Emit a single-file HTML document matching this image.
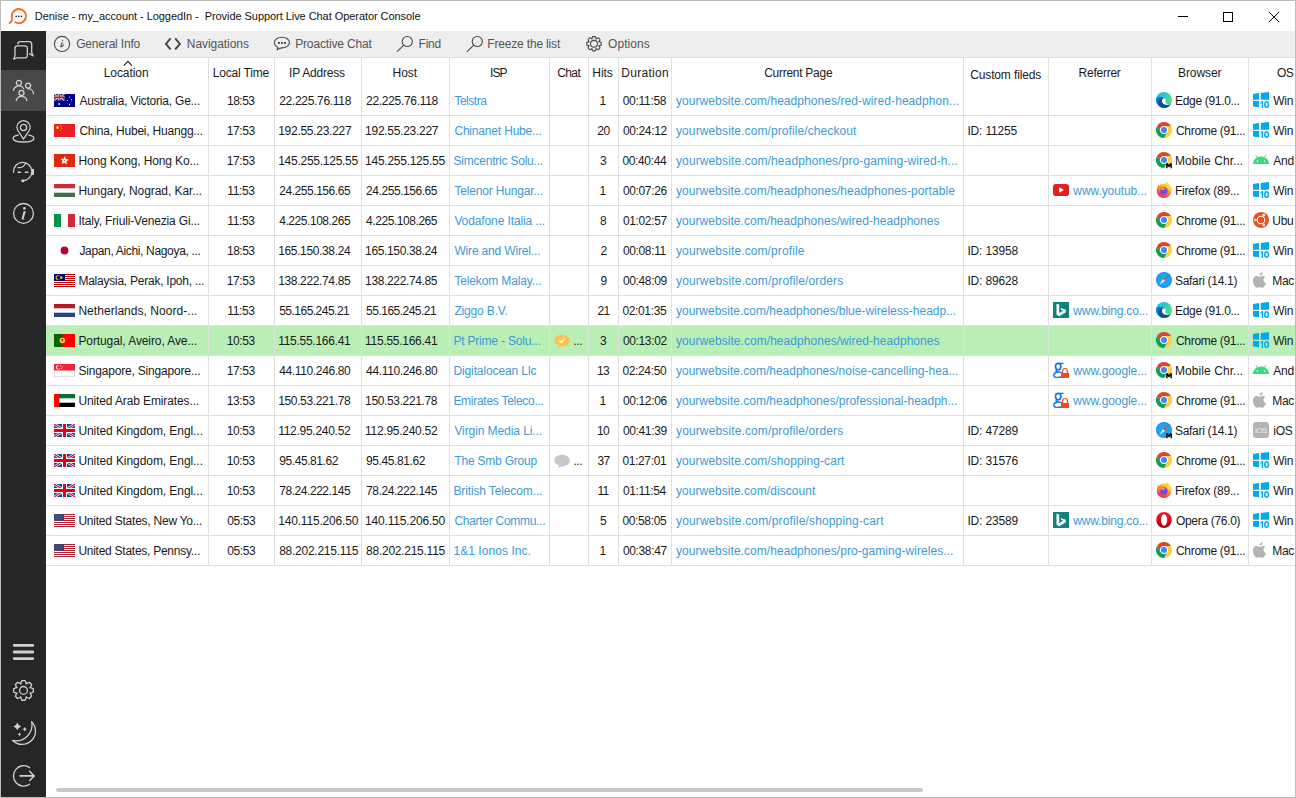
<!DOCTYPE html>
<html><head><meta charset="utf-8"><style>
*{box-sizing:border-box;margin:0;padding:0}
html,body{width:1296px;height:798px;overflow:hidden;background:#fff}
body{position:relative;font-family:"Liberation Sans",sans-serif;font-size:12px;color:#1A1A1A}
.a{position:absolute}
.t{position:absolute;white-space:pre;line-height:14px}
.lk{color:#3C9AD6}
svg{position:absolute;display:block}
</style></head><body>
<div class="a" style="left:0;top:0;width:1296px;height:798px;border:1px solid #BDBDBD"></div>
<svg style="left:8px;top:7px" width="20" height="18" viewBox="0 0 20 18"><path d="M1.6,16.1 C3.6,14.6 4.4,12.9 4.1,11.2 A7.1,7.1 0 1 1 7.4,15.3" fill="none" stroke="#F26A1B" stroke-width="1.8" stroke-linecap="round"/><circle cx="8.2" cy="9.4" r="0.8" fill="#222"/><circle cx="10.8" cy="9.4" r="0.8" fill="#222"/><circle cx="13.5" cy="9.4" r="0.8" fill="#222"/></svg>
<div class="a" style="left:1178px;top:16px;width:10px;height:1px;background:#000"></div>
<div class="a" style="left:1223px;top:12px;width:10px;height:10px;border:1px solid #000"></div>
<svg style="left:1268px;top:11px" width="12" height="12" viewBox="0 0 12 12"><path d="M0.8,0.8 L11.2,11.2 M11.2,0.8 L0.8,11.2" stroke="#000" stroke-width="1"/></svg>
<div class="a" style="left:1px;top:31px;width:45px;height:766px;background:#252628"></div>
<div class="a" style="left:1px;top:70px;width:45px;height:41px;background:#484848"></div>
<svg style="left:12px;top:40px" width="24" height="22" viewBox="0 0 24 22"><g fill="none" stroke="#D0D0D0" stroke-width="1.3" stroke-linecap="round" stroke-linejoin="round"><path d="M5.8,3.8 A2.5,2.5 0 0 1 8.2,1.6 H17.2 A2.5,2.5 0 0 1 19.7,4.1 V12.6 L21.2,15.9 L17.4,13.8"/><path d="M4.6,17.9 H12.8 A2.5,2.5 0 0 0 15.3,15.4 V8.3 A2.5,2.5 0 0 0 12.8,5.8 H5.5 A2.5,2.5 0 0 0 3,8.3 V15.6 L1.7,19.2 Z"/></g></svg>
<svg style="left:12px;top:79px" width="24" height="24" viewBox="0 0 24 24"><g fill="none" stroke="#D0D0D0" stroke-width="1.3" stroke-linecap="round" stroke-linejoin="round"><circle cx="6.85" cy="3.9" r="2.5"/><path d="M1.4,11.4 A5.6,5.6 0 0 1 11.6,9.5"/><circle cx="16.1" cy="6.6" r="2.5"/><path d="M15.4,9.6 A6,6 0 0 1 21.6,14.6"/><circle cx="9.5" cy="13.9" r="2.5"/><path d="M4.2,21.5 A5.5,5.5 0 0 1 14.9,21.5"/></g></svg>
<svg style="left:12px;top:120px" width="24" height="24" viewBox="0 0 24 24"><g fill="none" stroke="#D0D0D0" stroke-width="1.3" stroke-linecap="round" stroke-linejoin="round"><path d="M11.5,19.2 L5.9,10.5 A6.5,6.5 0 1 1 17.1,10.5 Z"/><circle cx="11.5" cy="7.5" r="3.1"/><path d="M6.2,15.2 C3,15.7 1.1,17 1.1,18.5 C1.1,20.5 5.7,22 11.5,22 C17.3,22 21.9,20.5 21.9,18.5 C21.9,17 20,15.7 16.8,15.2"/></g></svg>
<svg style="left:12px;top:161px" width="24" height="24" viewBox="0 0 24 24"><g fill="none" stroke="#D0D0D0" stroke-width="1.3" stroke-linecap="round" stroke-linejoin="round"><path d="M1.5,11.3 A9.2,9.2 0 1 1 10.8,19.7"/><path d="M6,6.7 C9.5,6.9 12.5,5.1 13.6,2.1"/><path d="M6.1,11.3 H8.4 M13.4,11.3 H15.7" stroke-width="1.6"/></g><rect x="19.9" y="7.9" width="2.1" height="6" fill="#D0D0D0"/><circle cx="10.8" cy="19.8" r="1.55" fill="#D0D0D0"/></svg>
<svg style="left:12px;top:202px" width="24" height="24" viewBox="0 0 24 24"><g fill="none" stroke="#D0D0D0" stroke-width="1.3" stroke-linecap="round" stroke-linejoin="round"><circle cx="11.5" cy="11.4" r="9.9"/></g><path d="M11.6,9.3 L13.9,9.3 L11.7,16.2 C11.6,16.7 12,16.8 12.6,16.4 L12.4,17.2 C11.2,17.9 9.3,17.9 9.7,16.3Z" fill="#D0D0D0"/><circle cx="12.4" cy="6.3" r="1.35" fill="#D0D0D0"/></svg>
<svg style="left:12px;top:642px" width="24" height="20" viewBox="0 0 24 20"><path d="M2.2,3.3 H20.8 M2.2,10 H20.8 M2.2,16.6 H20.8" stroke="#D0D0D0" stroke-width="2.8" stroke-linecap="round"/></svg>
<svg style="left:12px;top:679px" width="24" height="23" viewBox="0 0 24 23"><g fill="none" stroke="#D0D0D0" stroke-width="1.3" stroke-linecap="round" stroke-linejoin="round"><path d="M9.05,3.47 L9.91,1.53 L13.09,1.53 L13.95,3.47 L14.18,4.93 L15.37,4.06 L17.35,3.29 L19.61,5.55 L18.84,7.53 L17.97,8.72 L19.43,8.95 L21.37,9.81 L21.37,12.99 L19.43,13.85 L17.97,14.08 L18.84,15.27 L19.61,17.25 L17.35,19.51 L15.37,18.74 L14.18,17.87 L13.95,19.33 L13.09,21.27 L9.91,21.27 L9.05,19.33 L8.82,17.87 L7.63,18.74 L5.65,19.51 L3.39,17.25 L4.16,15.27 L5.03,14.08 L3.57,13.85 L1.63,12.99 L1.63,9.81 L3.57,8.95 L5.03,8.72 L4.16,7.53 L3.39,5.55 L5.65,3.29 L7.63,4.06 L8.82,4.93Z"/><circle cx="11.5" cy="11.4" r="3.9"/></g></svg>
<svg style="left:12px;top:720px" width="26" height="26" viewBox="0 0 26 26"><g fill="none" stroke="#D0D0D0" stroke-width="1.3" stroke-linecap="round" stroke-linejoin="round"><path d="M19.6,1.6 A12.5,12.5 0 1 1 0.6,20.5 A16,16 0 0 0 19.6,1.6Z"/></g><path d="M5.30,2.50 Q6.16,5.54 9.20,6.40 Q6.16,7.26 5.30,10.30 Q4.44,7.26 1.40,6.40 Q4.44,5.54 5.30,2.50Z M12.70,7.00 Q13.21,8.79 15.00,9.30 Q13.21,9.81 12.70,11.60 Q12.19,9.81 10.40,9.30 Q12.19,8.79 12.70,7.00Z M7.50,12.40 Q7.92,13.88 9.40,14.30 Q7.92,14.72 7.50,16.20 Q7.08,14.72 5.60,14.30 Q7.08,13.88 7.50,12.40Z" fill="#D0D0D0"/></svg>
<svg style="left:12px;top:764px" width="24" height="24" viewBox="0 0 24 24"><g fill="none" stroke="#D0D0D0" stroke-width="1.3" stroke-linecap="round" stroke-linejoin="round"><path d="M17.6,3.6 A10.2,10.2 0 1 0 17.6,20.2"/><path d="M8.2,11.9 H22" stroke-width="1.7"/><path d="M17.6,7.3 L22.1,11.9 L17.6,16.5" stroke-width="1.5"/></g></svg>
<div class="a" style="left:46px;top:31px;width:1249px;height:27px;background:#EEEEEE;border-bottom:1px solid #DCDCDC"></div>
<svg style="left:53px;top:35px" width="18" height="18" viewBox="0 0 18 18"><circle cx="9" cy="8.95" r="7.6" fill="none" stroke="#4A4A4A" stroke-width="1.1" stroke-linecap="round" stroke-linejoin="round"/><path d="M9.2,7.5 L7.8,11.1 C7.4,12.2 8.8,12.1 10.7,9.9" fill="none" stroke="#4A4A4A" stroke-width="1.1" stroke-linecap="round" stroke-linejoin="round"/><circle cx="9.6" cy="5.4" r="0.65" fill="#4A4A4A"/></svg>
<svg style="left:164px;top:36px" width="18" height="16" viewBox="0 0 18 16"><path d="M6.6,2.4 L1.9,7.9 L6.6,13.4 M11.2,2.4 L15.9,7.9 L11.2,13.4" fill="none" stroke="#444" stroke-width="1.9" stroke-linejoin="miter"/></svg>
<svg style="left:273px;top:35px" width="18" height="18" viewBox="0 0 18 18"><path d="M4.1,14.9 L4.8,12.3 C2.5,11.3 1.4,9.6 1.4,7.6 C1.4,4.6 4.8,2.3 8.95,2.3 C13.1,2.3 16.5,4.6 16.5,7.6 C16.5,10.6 13.1,12.9 8.95,12.9 C7.6,12.9 6.4,13.3 4.1,14.9Z" fill="none" stroke="#4A4A4A" stroke-width="1.1" stroke-linecap="round" stroke-linejoin="round"/><rect x="5.05" y="7" width="1.9" height="1.9" fill="#444"/><rect x="8.05" y="7" width="1.9" height="1.9" fill="#444"/><rect x="11.05" y="7" width="1.9" height="1.9" fill="#444"/></svg>
<svg style="left:396px;top:35px" width="18" height="18" viewBox="0 0 18 18"><circle cx="11.3" cy="6.5" r="5.05" fill="none" stroke="#4A4A4A" stroke-width="1.1" stroke-linecap="round" stroke-linejoin="round"/><path d="M7.7,10.1 L1.4,16.4" fill="none" stroke="#4A4A4A" stroke-width="1.1" stroke-linecap="round" stroke-linejoin="round"/></svg>
<svg style="left:466px;top:35px" width="18" height="18" viewBox="0 0 18 18"><circle cx="11.3" cy="6.5" r="5.05" fill="none" stroke="#4A4A4A" stroke-width="1.1" stroke-linecap="round" stroke-linejoin="round"/><path d="M7.7,10.1 L1.4,16.4" fill="none" stroke="#4A4A4A" stroke-width="1.1" stroke-linecap="round" stroke-linejoin="round"/></svg>
<svg style="left:585px;top:35px" width="18" height="18" viewBox="0 0 18 18"><path d="M7.09,3.17 L7.62,1.58 L10.38,1.58 L10.91,3.17 L10.95,4.04 L11.59,3.45 L13.09,2.71 L15.04,4.66 L14.30,6.16 L13.71,6.80 L14.58,6.84 L16.17,7.37 L16.17,10.13 L14.58,10.66 L13.71,10.70 L14.30,11.34 L15.04,12.84 L13.09,14.79 L11.59,14.05 L10.95,13.46 L10.91,14.33 L10.38,15.92 L7.62,15.92 L7.09,14.33 L7.05,13.46 L6.41,14.05 L4.91,14.79 L2.96,12.84 L3.70,11.34 L4.29,10.70 L3.42,10.66 L1.83,10.13 L1.83,7.37 L3.42,6.84 L4.29,6.80 L3.70,6.16 L2.96,4.66 L4.91,2.71 L6.41,3.45 L7.05,4.04Z" fill="none" stroke="#4A4A4A" stroke-width="1.1" stroke-linecap="round" stroke-linejoin="round"/><circle cx="9" cy="8.75" r="3.4" fill="none" stroke="#4A4A4A" stroke-width="1.1" stroke-linecap="round" stroke-linejoin="round"/></svg>
<div class="a" style="left:46px;top:115px;width:1249px;height:1px;background:#E0E0E0"></div>
<div class="a" style="left:46px;top:145px;width:1249px;height:1px;background:#E0E0E0"></div>
<div class="a" style="left:46px;top:175px;width:1249px;height:1px;background:#E0E0E0"></div>
<div class="a" style="left:46px;top:205px;width:1249px;height:1px;background:#E0E0E0"></div>
<div class="a" style="left:46px;top:235px;width:1249px;height:1px;background:#E0E0E0"></div>
<div class="a" style="left:46px;top:265px;width:1249px;height:1px;background:#E0E0E0"></div>
<div class="a" style="left:46px;top:295px;width:1249px;height:1px;background:#E0E0E0"></div>
<div class="a" style="left:46px;top:325px;width:1249px;height:1px;background:#E0E0E0"></div>
<div class="a" style="left:46px;top:355px;width:1249px;height:1px;background:#E0E0E0"></div>
<div class="a" style="left:46px;top:385px;width:1249px;height:1px;background:#E0E0E0"></div>
<div class="a" style="left:46px;top:415px;width:1249px;height:1px;background:#E0E0E0"></div>
<div class="a" style="left:46px;top:445px;width:1249px;height:1px;background:#E0E0E0"></div>
<div class="a" style="left:46px;top:475px;width:1249px;height:1px;background:#E0E0E0"></div>
<div class="a" style="left:46px;top:505px;width:1249px;height:1px;background:#E0E0E0"></div>
<div class="a" style="left:46px;top:535px;width:1249px;height:1px;background:#E0E0E0"></div>
<div class="a" style="left:46px;top:565px;width:1249px;height:1px;background:#E0E0E0"></div>
<div class="a" style="left:46px;top:326px;width:1249px;height:29px;background:#B9EEB7"></div>
<div class="a" style="left:208px;top:58px;width:1px;height:508px;background:#E0E0E0"></div>
<div class="a" style="left:274px;top:58px;width:1px;height:508px;background:#E0E0E0"></div>
<div class="a" style="left:361px;top:58px;width:1px;height:508px;background:#E0E0E0"></div>
<div class="a" style="left:449px;top:58px;width:1px;height:508px;background:#E0E0E0"></div>
<div class="a" style="left:549px;top:58px;width:1px;height:508px;background:#E0E0E0"></div>
<div class="a" style="left:588px;top:58px;width:1px;height:508px;background:#E0E0E0"></div>
<div class="a" style="left:618px;top:58px;width:1px;height:508px;background:#E0E0E0"></div>
<div class="a" style="left:671px;top:58px;width:1px;height:508px;background:#E0E0E0"></div>
<div class="a" style="left:963px;top:58px;width:1px;height:508px;background:#E0E0E0"></div>
<div class="a" style="left:1048px;top:58px;width:1px;height:508px;background:#E0E0E0"></div>
<div class="a" style="left:1151px;top:58px;width:1px;height:508px;background:#E0E0E0"></div>
<div class="a" style="left:1248px;top:58px;width:1px;height:508px;background:#E0E0E0"></div>
<svg style="left:123px;top:59.5px" width="10" height="7" viewBox="0 0 10 7"><path d="M0.9,5.6 L4.9,1.3 L8.9,5.6" fill="none" stroke="#222" stroke-width="1.1"/></svg>
<svg style="left:54px;top:94px" width="21" height="13" viewBox="0 0 21 13"><rect width="21" height="13" fill="#00008B"/><g><rect width="10.5" height="6.5" fill="#012169"/><path d="M0,0L10.5,6.5M10.5,0L0,6.5" stroke="#fff" stroke-width="1.30"/><path d="M0,0L10.5,6.5M10.5,0L0,6.5" stroke="#C8102E" stroke-width="0.52"/><path d="M5.25,0V6.5M0,3.25H10.5" stroke="#fff" stroke-width="2.21"/><path d="M5.25,0V6.5M0,3.25H10.5" stroke="#C8102E" stroke-width="1.30"/></g><circle cx="5.2" cy="10" r="0.9" fill="#fff"/><circle cx="15.5" cy="3" r="0.6" fill="#fff"/><circle cx="13.5" cy="6.5" r="0.6" fill="#fff"/><circle cx="17.5" cy="5.8" r="0.6" fill="#fff"/><circle cx="15.5" cy="10.5" r="0.7" fill="#fff"/></svg>
<svg style="left:1156px;top:92px" width="16" height="16" viewBox="0 0 16 16" overflow="visible"><defs><linearGradient id="eg" x1="0" y1="0.2" x2="1" y2="0.5"><stop offset="0" stop-color="#2AB4EC"/><stop offset="0.5" stop-color="#2EC4C8"/><stop offset="1" stop-color="#5CE46A"/></linearGradient></defs><circle cx="8" cy="8" r="8" fill="url(#eg)"/><path d="M0.15,6.6 C2.5,4.8 6.5,4.6 8.8,6.2 C10.2,7.2 10.2,9.2 9.8,10.4 C9.6,11.4 11,12.5 13,12.5 C14.5,12.5 15.5,11.5 15.95,9.1 A8,8 0 0 1 0.15,6.6Z" fill="#1173D4"/><path d="M2.6,9.5 C3,7.2 5.5,5.8 8,6.2 C6.7,6.7 5.9,7.8 5.9,8.9 C5.9,10.6 7,11.9 8.6,12.4 C10,13 12.5,13 14.9,12.3 C13.4,14.7 10.9,16 8,16 C5.7,16 3.9,14.8 3.1,13.2 C2.6,12 2.4,10.8 2.6,9.5Z" fill="#0A4EA2"/><path d="M5.9,8.7 C5.9,7.3 6.9,6.3 8.1,6.3 C9.3,6.3 10,7.2 9.8,8.5 C9.6,9.6 9.4,10.4 9.8,11 C10.4,11.9 12.3,12.4 14.9,12.3 C12.5,13 10,13 8.6,12.4 C7,11.8 5.9,10.4 5.9,8.7Z" fill="#fff"/></svg>
<svg style="left:1253px;top:92px" width="16" height="16" viewBox="0 0 16 16" overflow="visible"><path d="M0,1.9 L6,1.1 V7.8 H0Z M7.8,0.9 L16,0 V7.8 H7.8Z M0,9 H6 V15.2 L0,14.4Z" fill="#03A9F0"/><path d="M7.5,10.3 L9.1,9 H10.1 V15.9 H8.7 V10.9 L7.5,11.6Z" fill="#03A9F0"/><ellipse cx="13.6" cy="12.45" rx="1.85" ry="2.75" fill="none" stroke="#03A9F0" stroke-width="1.5"/></svg>
<svg style="left:54px;top:124px" width="21" height="13" viewBox="0 0 21 13"><rect width="21" height="13" fill="#EE1C25"/><circle cx="3.5" cy="3.5" r="1.6" fill="#FFDE00"/><circle cx="6.6" cy="1.6" r="0.5" fill="#FFDE00"/><circle cx="7.6" cy="3" r="0.5" fill="#FFDE00"/><circle cx="7.6" cy="4.6" r="0.5" fill="#FFDE00"/><circle cx="6.6" cy="5.9" r="0.5" fill="#FFDE00"/></svg>
<svg style="left:1156px;top:122px" width="16" height="16" viewBox="0 0 16 16" overflow="visible"><defs></defs><path d="M1.07,4 A8,8 0 0 1 14.93,4 L8,4 A4,4 0 0 0 4.54,10 Z" fill="#DB4437"/><path d="M14.93,4 A8,8 0 0 1 8,16 L11.46,10 A4,4 0 0 0 8,4 Z" fill="#FFCD40"/><path d="M8,16 A8,8 0 0 1 1.07,4 L4.54,10 A4,4 0 0 0 11.46,10 Z" fill="#0F9D58"/><circle cx="8" cy="8" r="3.75" fill="#fff"/><circle cx="8" cy="8" r="3.05" fill="#4285F4"/></svg>
<svg style="left:1253px;top:122px" width="16" height="16" viewBox="0 0 16 16" overflow="visible"><path d="M0,1.9 L6,1.1 V7.8 H0Z M7.8,0.9 L16,0 V7.8 H7.8Z M0,9 H6 V15.2 L0,14.4Z" fill="#03A9F0"/><path d="M7.5,10.3 L9.1,9 H10.1 V15.9 H8.7 V10.9 L7.5,11.6Z" fill="#03A9F0"/><ellipse cx="13.6" cy="12.45" rx="1.85" ry="2.75" fill="none" stroke="#03A9F0" stroke-width="1.5"/></svg>
<svg style="left:54px;top:154px" width="21" height="13" viewBox="0 0 21 13"><rect width="21" height="13" fill="#DE2910"/><path d="M10.89,2.72 L11.70,5.26 L14.31,5.77 L12.15,7.32 L12.47,9.97 L10.32,8.39 L7.90,9.51 L8.74,6.98 L6.93,5.03 L9.59,5.05Z" fill="#fff" stroke="#fff" stroke-width="0.5" stroke-linejoin="round"/><circle cx="10.5" cy="6.6" r="0.5" fill="#DE2910"/></svg>
<svg style="left:1156px;top:152px" width="16" height="16" viewBox="0 0 16 16" overflow="visible"><defs></defs><path d="M1.07,4 A8,8 0 0 1 14.93,4 L8,4 A4,4 0 0 0 4.54,10 Z" fill="#DB4437"/><path d="M14.93,4 A8,8 0 0 1 8,16 L11.46,10 A4,4 0 0 0 8,4 Z" fill="#FFCD40"/><path d="M8,16 A8,8 0 0 1 1.07,4 L4.54,10 A4,4 0 0 0 11.46,10 Z" fill="#0F9D58"/><circle cx="8" cy="8" r="3.75" fill="#fff"/><circle cx="8" cy="8" r="3.05" fill="#4285F4"/><path d="M10.2,16.3 V11.2 H12 L13.05,13.3 L14.1,11.2 H15.9 V16.3 H14.5 V13.6 L13.5,15.2 H12.6 L11.6,13.6 V16.3Z" fill="#000"/></svg>
<svg style="left:1253px;top:152px" width="16" height="16" viewBox="0 0 16 16" overflow="visible"><path d="M-0.1,12 C0.2,7.6 3.6,4.5 8,4.5 C12.4,4.5 15.8,7.6 16.1,12Z" fill="#3DD882"/><ellipse cx="4.4" cy="9.2" rx="0.65" ry="0.85" fill="#fff"/><ellipse cx="11.5" cy="9.2" rx="0.65" ry="0.85" fill="#fff"/><path d="M3,3.3 L4,5.2 M12.6,3.3 L11.6,5.2" stroke="#3DD882" stroke-width="0.9" stroke-linecap="round"/></svg>
<svg style="left:54px;top:184px" width="21" height="13" viewBox="0 0 21 13"><rect width="21" height="13" fill="#fff"/><rect width="21" height="4.3" fill="#CD2A3E"/><rect y="8.7" width="21" height="4.3" fill="#436F4D"/></svg>
<svg style="left:1053px;top:184px" width="16" height="12" viewBox="0 0 16 12"><rect x="0" y="0" width="16" height="12" rx="2.8" fill="#DC2222"/><path d="M6.2,3.2 L10.8,6 L6.2,8.8Z" fill="#fff"/></svg>
<svg style="left:1156px;top:182px" width="16" height="16" viewBox="0 0 16 16" overflow="visible"><defs><linearGradient id="ff" x1="0.8" y1="0.1" x2="0.3" y2="1"><stop offset="0" stop-color="#FFE03B"/><stop offset="0.45" stop-color="#FF8A2A"/><stop offset="0.8" stop-color="#FF3F4F"/><stop offset="1" stop-color="#E8137B"/></linearGradient><linearGradient id="fp" x1="0.7" y1="0" x2="0.3" y2="1"><stop offset="0" stop-color="#A93BF0"/><stop offset="1" stop-color="#4B52E8"/></linearGradient></defs><circle cx="8" cy="8.8" r="7.3" fill="url(#ff)"/><path d="M9.3,3.5 C10,2 10.3,0.8 10.5,0 C13.2,1.8 15.6,4.6 15.9,8.5 L12.5,8Z" fill="#FFD93A"/><path d="M0.9,7 C1.2,5.3 1.8,4 2.6,3.1 L3.3,4.6 L4.5,3.4 L5.2,5 C7,4.6 9,5.2 10,6.5 L6.5,9.5Z" fill="#FF8B1F"/><circle cx="7.9" cy="8.9" r="3.7" fill="url(#fp)"/><path d="M4.3,7.6 C5,6 6.8,5.5 8.2,5.9 C9.3,6.4 9.2,7.5 7.9,7.8 C6.6,8.1 5.6,7.7 4.3,7.6Z" fill="#FF9B22"/></svg>
<svg style="left:1253px;top:182px" width="16" height="16" viewBox="0 0 16 16" overflow="visible"><path d="M0,1.9 L6,1.1 V7.8 H0Z M7.8,0.9 L16,0 V7.8 H7.8Z M0,9 H6 V15.2 L0,14.4Z" fill="#03A9F0"/><path d="M7.5,10.3 L9.1,9 H10.1 V15.9 H8.7 V10.9 L7.5,11.6Z" fill="#03A9F0"/><ellipse cx="13.6" cy="12.45" rx="1.85" ry="2.75" fill="none" stroke="#03A9F0" stroke-width="1.5"/></svg>
<svg style="left:54px;top:214px" width="21" height="13" viewBox="0 0 21 13"><rect width="21" height="13" fill="#fff"/><rect width="7" height="13" fill="#009246"/><rect x="14" width="7" height="13" fill="#CE2B37"/></svg>
<svg style="left:1156px;top:212px" width="16" height="16" viewBox="0 0 16 16" overflow="visible"><defs></defs><path d="M1.07,4 A8,8 0 0 1 14.93,4 L8,4 A4,4 0 0 0 4.54,10 Z" fill="#DB4437"/><path d="M14.93,4 A8,8 0 0 1 8,16 L11.46,10 A4,4 0 0 0 8,4 Z" fill="#FFCD40"/><path d="M8,16 A8,8 0 0 1 1.07,4 L4.54,10 A4,4 0 0 0 11.46,10 Z" fill="#0F9D58"/><circle cx="8" cy="8" r="3.75" fill="#fff"/><circle cx="8" cy="8" r="3.05" fill="#4285F4"/></svg>
<svg style="left:1253px;top:212px" width="16" height="16" viewBox="0 0 16 16" overflow="visible"><circle cx="8" cy="8" r="8" fill="#E95420"/><circle cx="8" cy="8" r="3.7" fill="none" stroke="#fff" stroke-width="1.1"/><circle cx="8" cy="8" r="2.6" fill="#E95420"/><circle cx="2.4" cy="8" r="1.3" fill="#fff"/><circle cx="10.8" cy="3.1" r="1.3" fill="#fff"/><circle cx="10.8" cy="12.9" r="1.3" fill="#fff"/><circle cx="2.4" cy="8" r="0.5" fill="#E95420"/></svg>
<svg style="left:54px;top:244px" width="21" height="13" viewBox="0 0 21 13"><rect width="21" height="13" fill="#fff"/><circle cx="10.5" cy="6.5" r="3.9" fill="#BC002D"/></svg>
<svg style="left:1156px;top:242px" width="16" height="16" viewBox="0 0 16 16" overflow="visible"><defs></defs><path d="M1.07,4 A8,8 0 0 1 14.93,4 L8,4 A4,4 0 0 0 4.54,10 Z" fill="#DB4437"/><path d="M14.93,4 A8,8 0 0 1 8,16 L11.46,10 A4,4 0 0 0 8,4 Z" fill="#FFCD40"/><path d="M8,16 A8,8 0 0 1 1.07,4 L4.54,10 A4,4 0 0 0 11.46,10 Z" fill="#0F9D58"/><circle cx="8" cy="8" r="3.75" fill="#fff"/><circle cx="8" cy="8" r="3.05" fill="#4285F4"/></svg>
<svg style="left:1253px;top:242px" width="16" height="16" viewBox="0 0 16 16" overflow="visible"><path d="M0,1.9 L6,1.1 V7.8 H0Z M7.8,0.9 L16,0 V7.8 H7.8Z M0,9 H6 V15.2 L0,14.4Z" fill="#03A9F0"/><path d="M7.5,10.3 L9.1,9 H10.1 V15.9 H8.7 V10.9 L7.5,11.6Z" fill="#03A9F0"/><ellipse cx="13.6" cy="12.45" rx="1.85" ry="2.75" fill="none" stroke="#03A9F0" stroke-width="1.5"/></svg>
<svg style="left:54px;top:274px" width="21" height="13" viewBox="0 0 21 13"><rect width="21" height="13" fill="#fff"/><rect y="0" width="21" height="1" fill="#CC0001"/><rect y="2" width="21" height="1" fill="#CC0001"/><rect y="4" width="21" height="1" fill="#CC0001"/><rect y="6" width="21" height="1" fill="#CC0001"/><rect y="8" width="21" height="1" fill="#CC0001"/><rect y="10" width="21" height="1" fill="#CC0001"/><rect y="12" width="21" height="1" fill="#CC0001"/><rect width="11" height="7" fill="#010066"/><circle cx="4.2" cy="3.6" r="2.6" fill="#E8B400"/><circle cx="5.1" cy="3.6" r="2.2" fill="#010066"/><circle cx="7.2" cy="3.6" r="1.35" fill="#FFCC00"/></svg>
<svg style="left:1156px;top:272px" width="16" height="16" viewBox="0 0 16 16" overflow="visible"><circle cx="8" cy="8" r="8" fill="#1D8EF2"/><circle cx="8" cy="8" r="6.8" fill="#19A6F3"/><path d="M12.9,3.1 L8.9,8.9 L7.1,7.1Z" fill="#F2433A"/><path d="M3.1,12.9 L7.1,7.1 L8.9,8.9Z" fill="#F2F2F2"/></svg>
<svg style="left:1253px;top:272px" width="16" height="16" viewBox="0 0 16 16" overflow="visible"><path d="M6.5,4.8 C5.3,4.8 4.6,4 3.2,4 C1.4,4 0,5.8 0,8.6 C0,11.8 2.1,15.8 3.7,15.8 C4.8,15.8 5.2,15.2 6.5,15.2 C7.8,15.2 8.1,15.8 9.3,15.8 C10.8,15.8 12.2,13.4 13,11.5 C11.4,10.8 10.5,9.5 10.5,8 C10.5,6.6 11.4,5.5 12.5,4.8 C11.7,4.2 10.8,4 9.9,4 C8.4,4 7.7,4.8 6.5,4.8Z" fill="#B3B3B3"/><path d="M6.6,3.6 C6.6,1.8 8,0.3 9.8,0 C9.8,2 8.4,3.5 6.6,3.6Z" fill="#B3B3B3"/></svg>
<svg style="left:54px;top:304px" width="21" height="13" viewBox="0 0 21 13"><rect width="21" height="13" fill="#fff"/><rect width="21" height="4.3" fill="#AE1C28"/><rect y="8.7" width="21" height="4.3" fill="#21468B"/></svg>
<svg style="left:1053px;top:302px" width="16" height="16" viewBox="0 0 16 16"><rect width="16" height="16" fill="#10827C"/><path d="M3.5,1.7 L6.2,2.6 V11 L10.2,8.8 L8.3,7.9 L7.5,5.9 L12.8,7.7 V10.3 L6.2,14.2 L3.5,12.6 Z" fill="#fff"/></svg>
<svg style="left:1156px;top:302px" width="16" height="16" viewBox="0 0 16 16" overflow="visible"><defs><linearGradient id="eg" x1="0" y1="0.2" x2="1" y2="0.5"><stop offset="0" stop-color="#2AB4EC"/><stop offset="0.5" stop-color="#2EC4C8"/><stop offset="1" stop-color="#5CE46A"/></linearGradient></defs><circle cx="8" cy="8" r="8" fill="url(#eg)"/><path d="M0.15,6.6 C2.5,4.8 6.5,4.6 8.8,6.2 C10.2,7.2 10.2,9.2 9.8,10.4 C9.6,11.4 11,12.5 13,12.5 C14.5,12.5 15.5,11.5 15.95,9.1 A8,8 0 0 1 0.15,6.6Z" fill="#1173D4"/><path d="M2.6,9.5 C3,7.2 5.5,5.8 8,6.2 C6.7,6.7 5.9,7.8 5.9,8.9 C5.9,10.6 7,11.9 8.6,12.4 C10,13 12.5,13 14.9,12.3 C13.4,14.7 10.9,16 8,16 C5.7,16 3.9,14.8 3.1,13.2 C2.6,12 2.4,10.8 2.6,9.5Z" fill="#0A4EA2"/><path d="M5.9,8.7 C5.9,7.3 6.9,6.3 8.1,6.3 C9.3,6.3 10,7.2 9.8,8.5 C9.6,9.6 9.4,10.4 9.8,11 C10.4,11.9 12.3,12.4 14.9,12.3 C12.5,13 10,13 8.6,12.4 C7,11.8 5.9,10.4 5.9,8.7Z" fill="#fff"/></svg>
<svg style="left:1253px;top:302px" width="16" height="16" viewBox="0 0 16 16" overflow="visible"><path d="M0,1.9 L6,1.1 V7.8 H0Z M7.8,0.9 L16,0 V7.8 H7.8Z M0,9 H6 V15.2 L0,14.4Z" fill="#03A9F0"/><path d="M7.5,10.3 L9.1,9 H10.1 V15.9 H8.7 V10.9 L7.5,11.6Z" fill="#03A9F0"/><ellipse cx="13.6" cy="12.45" rx="1.85" ry="2.75" fill="none" stroke="#03A9F0" stroke-width="1.5"/></svg>
<svg style="left:54px;top:334px" width="21" height="13" viewBox="0 0 21 13"><rect width="21" height="13" fill="#FF0000"/><rect width="8.4" height="13" fill="#006600"/><circle cx="8.4" cy="6.5" r="2.8" fill="#FFCC00"/><circle cx="8.4" cy="6.5" r="1.9" fill="#fff"/><rect x="7.4" y="5" width="2" height="2.6" fill="#FF0000"/></svg>
<svg style="left:554px;top:334px" width="17" height="15" viewBox="0 0 17 15"><path d="M4,14.2 L4.9,11.2 C2,10.6 0.3,8.8 0.3,6.6 C0.3,3.3 3.8,0.7 8.1,0.7 C12.4,0.7 15.9,3.3 15.9,6.6 C15.9,9.9 12.4,12.4 8.1,12.4 C6.9,12.4 5.6,13.2 4,14.2Z" fill="#FCC24A"/><path d="M5.2,6.4 L7.3,8.4 L11,4.4" fill="none" stroke="#fff" stroke-width="1.3"/></svg>
<svg style="left:1156px;top:332px" width="16" height="16" viewBox="0 0 16 16" overflow="visible"><defs></defs><path d="M1.07,4 A8,8 0 0 1 14.93,4 L8,4 A4,4 0 0 0 4.54,10 Z" fill="#DB4437"/><path d="M14.93,4 A8,8 0 0 1 8,16 L11.46,10 A4,4 0 0 0 8,4 Z" fill="#FFCD40"/><path d="M8,16 A8,8 0 0 1 1.07,4 L4.54,10 A4,4 0 0 0 11.46,10 Z" fill="#0F9D58"/><circle cx="8" cy="8" r="3.75" fill="#fff"/><circle cx="8" cy="8" r="3.05" fill="#4285F4"/></svg>
<svg style="left:1253px;top:332px" width="16" height="16" viewBox="0 0 16 16" overflow="visible"><path d="M0,1.9 L6,1.1 V7.8 H0Z M7.8,0.9 L16,0 V7.8 H7.8Z M0,9 H6 V15.2 L0,14.4Z" fill="#03A9F0"/><path d="M7.5,10.3 L9.1,9 H10.1 V15.9 H8.7 V10.9 L7.5,11.6Z" fill="#03A9F0"/><ellipse cx="13.6" cy="12.45" rx="1.85" ry="2.75" fill="none" stroke="#03A9F0" stroke-width="1.5"/></svg>
<svg style="left:54px;top:364px" width="21" height="13" viewBox="0 0 21 13"><rect width="21" height="13" fill="#fff"/><path d="M0.5,6.5 V12.5 H20.5 V6.5" fill="none" stroke="#E2E2E2" stroke-width="1"/><rect width="21" height="6.5" fill="#EF2335"/><circle cx="4.3" cy="3.3" r="2.3" fill="#fff"/><circle cx="5.3" cy="3.3" r="2.1" fill="#EF2335"/><circle cx="6.6" cy="1.9" r=".5" fill="#fff"/><circle cx="8.3" cy="2.9" r=".5" fill="#fff"/><circle cx="7.7" cy="4.6" r=".5" fill="#fff"/><circle cx="5.9" cy="4.7" r=".5" fill="#fff"/></svg>
<svg style="left:1053px;top:362px" width="16" height="16" viewBox="0 0 16 16"><g fill="none" stroke="#1A73E8"><ellipse cx="5.2" cy="4.6" rx="2.7" ry="3.2" stroke-width="1.7"/><path d="M5.8,1.4 H10.5" stroke-width="1.3"/><path d="M3.8,7.8 C2.5,8.6 3,9.6 4.5,9.7 C7,9.9 9.5,10.2 9.6,12.6 C9.7,15 7,15.5 4.8,15.5 C2,15.5 0.6,14.5 0.8,13 C1,11.5 2.7,10.3 4.5,9.9" stroke-width="1.5"/></g><path d="M9.6,11.2 V8.9 A2.4,2.4 0 0 1 14.4,8.9 V11.2" fill="none" stroke="#F4501A" stroke-width="1.2"/><rect x="8" y="11" width="8" height="5" fill="#F44B0E"/></svg>
<svg style="left:1156px;top:362px" width="16" height="16" viewBox="0 0 16 16" overflow="visible"><defs></defs><path d="M1.07,4 A8,8 0 0 1 14.93,4 L8,4 A4,4 0 0 0 4.54,10 Z" fill="#DB4437"/><path d="M14.93,4 A8,8 0 0 1 8,16 L11.46,10 A4,4 0 0 0 8,4 Z" fill="#FFCD40"/><path d="M8,16 A8,8 0 0 1 1.07,4 L4.54,10 A4,4 0 0 0 11.46,10 Z" fill="#0F9D58"/><circle cx="8" cy="8" r="3.75" fill="#fff"/><circle cx="8" cy="8" r="3.05" fill="#4285F4"/><path d="M10.2,16.3 V11.2 H12 L13.05,13.3 L14.1,11.2 H15.9 V16.3 H14.5 V13.6 L13.5,15.2 H12.6 L11.6,13.6 V16.3Z" fill="#000"/></svg>
<svg style="left:1253px;top:362px" width="16" height="16" viewBox="0 0 16 16" overflow="visible"><path d="M-0.1,12 C0.2,7.6 3.6,4.5 8,4.5 C12.4,4.5 15.8,7.6 16.1,12Z" fill="#3DD882"/><ellipse cx="4.4" cy="9.2" rx="0.65" ry="0.85" fill="#fff"/><ellipse cx="11.5" cy="9.2" rx="0.65" ry="0.85" fill="#fff"/><path d="M3,3.3 L4,5.2 M12.6,3.3 L11.6,5.2" stroke="#3DD882" stroke-width="0.9" stroke-linecap="round"/></svg>
<svg style="left:54px;top:394px" width="21" height="13" viewBox="0 0 21 13"><rect width="21" height="13" fill="#fff"/><rect width="21" height="4.3" fill="#00732F"/><rect y="8.7" width="21" height="4.3" fill="#000"/><rect width="5.2" height="13" fill="#FF0000"/></svg>
<svg style="left:1053px;top:392px" width="16" height="16" viewBox="0 0 16 16"><g fill="none" stroke="#1A73E8"><ellipse cx="5.2" cy="4.6" rx="2.7" ry="3.2" stroke-width="1.7"/><path d="M5.8,1.4 H10.5" stroke-width="1.3"/><path d="M3.8,7.8 C2.5,8.6 3,9.6 4.5,9.7 C7,9.9 9.5,10.2 9.6,12.6 C9.7,15 7,15.5 4.8,15.5 C2,15.5 0.6,14.5 0.8,13 C1,11.5 2.7,10.3 4.5,9.9" stroke-width="1.5"/></g><path d="M9.6,11.2 V8.9 A2.4,2.4 0 0 1 14.4,8.9 V11.2" fill="none" stroke="#F4501A" stroke-width="1.2"/><rect x="8" y="11" width="8" height="5" fill="#F44B0E"/></svg>
<svg style="left:1156px;top:392px" width="16" height="16" viewBox="0 0 16 16" overflow="visible"><defs></defs><path d="M1.07,4 A8,8 0 0 1 14.93,4 L8,4 A4,4 0 0 0 4.54,10 Z" fill="#DB4437"/><path d="M14.93,4 A8,8 0 0 1 8,16 L11.46,10 A4,4 0 0 0 8,4 Z" fill="#FFCD40"/><path d="M8,16 A8,8 0 0 1 1.07,4 L4.54,10 A4,4 0 0 0 11.46,10 Z" fill="#0F9D58"/><circle cx="8" cy="8" r="3.75" fill="#fff"/><circle cx="8" cy="8" r="3.05" fill="#4285F4"/></svg>
<svg style="left:1253px;top:392px" width="16" height="16" viewBox="0 0 16 16" overflow="visible"><path d="M6.5,4.8 C5.3,4.8 4.6,4 3.2,4 C1.4,4 0,5.8 0,8.6 C0,11.8 2.1,15.8 3.7,15.8 C4.8,15.8 5.2,15.2 6.5,15.2 C7.8,15.2 8.1,15.8 9.3,15.8 C10.8,15.8 12.2,13.4 13,11.5 C11.4,10.8 10.5,9.5 10.5,8 C10.5,6.6 11.4,5.5 12.5,4.8 C11.7,4.2 10.8,4 9.9,4 C8.4,4 7.7,4.8 6.5,4.8Z" fill="#B3B3B3"/><path d="M6.6,3.6 C6.6,1.8 8,0.3 9.8,0 C9.8,2 8.4,3.5 6.6,3.6Z" fill="#B3B3B3"/></svg>
<svg style="left:54px;top:424px" width="21" height="13" viewBox="0 0 21 13"><rect width="21" height="13" fill="#0A47A8"/><path d="M0,0L21,13M21,0L0,13" stroke="#fff" stroke-width="2.6"/><path d="M0,0L10.5,6.5M21,0L10.5,6.5M0,13L10.5,6.5M21,13L10.5,6.5" stroke="#E0001B" stroke-width="1.1"/><rect x="8" width="5" height="13" fill="#fff"/><rect y="4" width="21" height="5" fill="#fff"/><rect x="9" width="3" height="13" fill="#E0001B"/><rect y="5" width="21" height="3" fill="#E0001B"/></svg>
<svg style="left:1156px;top:422px" width="16" height="16" viewBox="0 0 16 16" overflow="visible"><circle cx="8" cy="8" r="8" fill="#1D8EF2"/><circle cx="8" cy="8" r="6.8" fill="#19A6F3"/><path d="M12.9,3.1 L8.9,8.9 L7.1,7.1Z" fill="#F2433A"/><path d="M3.1,12.9 L7.1,7.1 L8.9,8.9Z" fill="#F2F2F2"/><path d="M10.2,16.3 V11.2 H12 L13.05,13.3 L14.1,11.2 H15.9 V16.3 H14.5 V13.6 L13.5,15.2 H12.6 L11.6,13.6 V16.3Z" fill="#000"/></svg>
<svg style="left:1253px;top:422px" width="16" height="16" viewBox="0 0 16 16" overflow="visible"><rect x="0" y="0" width="16" height="16" rx="3.2" fill="#B4B4B4"/><text x="8" y="11.2" text-anchor="middle" font-family="Liberation Sans" font-size="8" fill="#EEEEEE" letter-spacing="-0.4">iOS</text></svg>
<svg style="left:54px;top:454px" width="21" height="13" viewBox="0 0 21 13"><rect width="21" height="13" fill="#0A47A8"/><path d="M0,0L21,13M21,0L0,13" stroke="#fff" stroke-width="2.6"/><path d="M0,0L10.5,6.5M21,0L10.5,6.5M0,13L10.5,6.5M21,13L10.5,6.5" stroke="#E0001B" stroke-width="1.1"/><rect x="8" width="5" height="13" fill="#fff"/><rect y="4" width="21" height="5" fill="#fff"/><rect x="9" width="3" height="13" fill="#E0001B"/><rect y="5" width="21" height="3" fill="#E0001B"/></svg>
<svg style="left:554px;top:454px" width="17" height="15" viewBox="0 0 17 15"><path d="M4,14.2 L4.9,11.2 C2,10.6 0.3,8.8 0.3,6.6 C0.3,3.3 3.8,0.7 8.1,0.7 C12.4,0.7 15.9,3.3 15.9,6.6 C15.9,9.9 12.4,12.4 8.1,12.4 C6.9,12.4 5.6,13.2 4,14.2Z" fill="#C8C8C8"/></svg>
<svg style="left:1156px;top:452px" width="16" height="16" viewBox="0 0 16 16" overflow="visible"><defs></defs><path d="M1.07,4 A8,8 0 0 1 14.93,4 L8,4 A4,4 0 0 0 4.54,10 Z" fill="#DB4437"/><path d="M14.93,4 A8,8 0 0 1 8,16 L11.46,10 A4,4 0 0 0 8,4 Z" fill="#FFCD40"/><path d="M8,16 A8,8 0 0 1 1.07,4 L4.54,10 A4,4 0 0 0 11.46,10 Z" fill="#0F9D58"/><circle cx="8" cy="8" r="3.75" fill="#fff"/><circle cx="8" cy="8" r="3.05" fill="#4285F4"/></svg>
<svg style="left:1253px;top:452px" width="16" height="16" viewBox="0 0 16 16" overflow="visible"><path d="M0,1.9 L6,1.1 V7.8 H0Z M7.8,0.9 L16,0 V7.8 H7.8Z M0,9 H6 V15.2 L0,14.4Z" fill="#03A9F0"/><path d="M7.5,10.3 L9.1,9 H10.1 V15.9 H8.7 V10.9 L7.5,11.6Z" fill="#03A9F0"/><ellipse cx="13.6" cy="12.45" rx="1.85" ry="2.75" fill="none" stroke="#03A9F0" stroke-width="1.5"/></svg>
<svg style="left:54px;top:484px" width="21" height="13" viewBox="0 0 21 13"><rect width="21" height="13" fill="#0A47A8"/><path d="M0,0L21,13M21,0L0,13" stroke="#fff" stroke-width="2.6"/><path d="M0,0L10.5,6.5M21,0L10.5,6.5M0,13L10.5,6.5M21,13L10.5,6.5" stroke="#E0001B" stroke-width="1.1"/><rect x="8" width="5" height="13" fill="#fff"/><rect y="4" width="21" height="5" fill="#fff"/><rect x="9" width="3" height="13" fill="#E0001B"/><rect y="5" width="21" height="3" fill="#E0001B"/></svg>
<svg style="left:1156px;top:482px" width="16" height="16" viewBox="0 0 16 16" overflow="visible"><defs><linearGradient id="ff" x1="0.8" y1="0.1" x2="0.3" y2="1"><stop offset="0" stop-color="#FFE03B"/><stop offset="0.45" stop-color="#FF8A2A"/><stop offset="0.8" stop-color="#FF3F4F"/><stop offset="1" stop-color="#E8137B"/></linearGradient><linearGradient id="fp" x1="0.7" y1="0" x2="0.3" y2="1"><stop offset="0" stop-color="#A93BF0"/><stop offset="1" stop-color="#4B52E8"/></linearGradient></defs><circle cx="8" cy="8.8" r="7.3" fill="url(#ff)"/><path d="M9.3,3.5 C10,2 10.3,0.8 10.5,0 C13.2,1.8 15.6,4.6 15.9,8.5 L12.5,8Z" fill="#FFD93A"/><path d="M0.9,7 C1.2,5.3 1.8,4 2.6,3.1 L3.3,4.6 L4.5,3.4 L5.2,5 C7,4.6 9,5.2 10,6.5 L6.5,9.5Z" fill="#FF8B1F"/><circle cx="7.9" cy="8.9" r="3.7" fill="url(#fp)"/><path d="M4.3,7.6 C5,6 6.8,5.5 8.2,5.9 C9.3,6.4 9.2,7.5 7.9,7.8 C6.6,8.1 5.6,7.7 4.3,7.6Z" fill="#FF9B22"/></svg>
<svg style="left:1253px;top:482px" width="16" height="16" viewBox="0 0 16 16" overflow="visible"><path d="M0,1.9 L6,1.1 V7.8 H0Z M7.8,0.9 L16,0 V7.8 H7.8Z M0,9 H6 V15.2 L0,14.4Z" fill="#03A9F0"/><path d="M7.5,10.3 L9.1,9 H10.1 V15.9 H8.7 V10.9 L7.5,11.6Z" fill="#03A9F0"/><ellipse cx="13.6" cy="12.45" rx="1.85" ry="2.75" fill="none" stroke="#03A9F0" stroke-width="1.5"/></svg>
<svg style="left:54px;top:514px" width="21" height="13" viewBox="0 0 21 13"><rect width="21" height="13" fill="#fff"/><rect y="0" width="21" height="1" fill="#B22234"/><rect y="2" width="21" height="1" fill="#B22234"/><rect y="4" width="21" height="1" fill="#B22234"/><rect y="6" width="21" height="1" fill="#B22234"/><rect y="8" width="21" height="1" fill="#B22234"/><rect y="10" width="21" height="1" fill="#B22234"/><rect y="12" width="21" height="1" fill="#B22234"/><rect width="10" height="7" fill="#3C3B6E"/><circle cx="1.20" cy="1.00" r="0.35" fill="#9fa3c8"/><circle cx="2.80" cy="1.00" r="0.35" fill="#9fa3c8"/><circle cx="4.40" cy="1.00" r="0.35" fill="#9fa3c8"/><circle cx="6.00" cy="1.00" r="0.35" fill="#9fa3c8"/><circle cx="7.60" cy="1.00" r="0.35" fill="#9fa3c8"/><circle cx="2.00" cy="2.25" r="0.35" fill="#9fa3c8"/><circle cx="3.60" cy="2.25" r="0.35" fill="#9fa3c8"/><circle cx="5.20" cy="2.25" r="0.35" fill="#9fa3c8"/><circle cx="6.80" cy="2.25" r="0.35" fill="#9fa3c8"/><circle cx="8.40" cy="2.25" r="0.35" fill="#9fa3c8"/><circle cx="1.20" cy="3.50" r="0.35" fill="#9fa3c8"/><circle cx="2.80" cy="3.50" r="0.35" fill="#9fa3c8"/><circle cx="4.40" cy="3.50" r="0.35" fill="#9fa3c8"/><circle cx="6.00" cy="3.50" r="0.35" fill="#9fa3c8"/><circle cx="7.60" cy="3.50" r="0.35" fill="#9fa3c8"/><circle cx="2.00" cy="4.75" r="0.35" fill="#9fa3c8"/><circle cx="3.60" cy="4.75" r="0.35" fill="#9fa3c8"/><circle cx="5.20" cy="4.75" r="0.35" fill="#9fa3c8"/><circle cx="6.80" cy="4.75" r="0.35" fill="#9fa3c8"/><circle cx="8.40" cy="4.75" r="0.35" fill="#9fa3c8"/><circle cx="1.20" cy="6.00" r="0.35" fill="#9fa3c8"/><circle cx="2.80" cy="6.00" r="0.35" fill="#9fa3c8"/><circle cx="4.40" cy="6.00" r="0.35" fill="#9fa3c8"/><circle cx="6.00" cy="6.00" r="0.35" fill="#9fa3c8"/><circle cx="7.60" cy="6.00" r="0.35" fill="#9fa3c8"/></svg>
<svg style="left:1053px;top:512px" width="16" height="16" viewBox="0 0 16 16"><rect width="16" height="16" fill="#10827C"/><path d="M3.5,1.7 L6.2,2.6 V11 L10.2,8.8 L8.3,7.9 L7.5,5.9 L12.8,7.7 V10.3 L6.2,14.2 L3.5,12.6 Z" fill="#fff"/></svg>
<svg style="left:1156px;top:512px" width="16" height="16" viewBox="0 0 16 16" overflow="visible"><defs><linearGradient id="op" x1="0" y1="0" x2="0" y2="1"><stop offset="0" stop-color="#FF1B2D"/><stop offset="1" stop-color="#A70014"/></linearGradient></defs><ellipse cx="8" cy="8" rx="7.8" ry="8" fill="url(#op)"/><ellipse cx="8.1" cy="8" rx="3.1" ry="5.7" fill="#fff"/></svg>
<svg style="left:1253px;top:512px" width="16" height="16" viewBox="0 0 16 16" overflow="visible"><path d="M0,1.9 L6,1.1 V7.8 H0Z M7.8,0.9 L16,0 V7.8 H7.8Z M0,9 H6 V15.2 L0,14.4Z" fill="#03A9F0"/><path d="M7.5,10.3 L9.1,9 H10.1 V15.9 H8.7 V10.9 L7.5,11.6Z" fill="#03A9F0"/><ellipse cx="13.6" cy="12.45" rx="1.85" ry="2.75" fill="none" stroke="#03A9F0" stroke-width="1.5"/></svg>
<svg style="left:54px;top:544px" width="21" height="13" viewBox="0 0 21 13"><rect width="21" height="13" fill="#fff"/><rect y="0" width="21" height="1" fill="#B22234"/><rect y="2" width="21" height="1" fill="#B22234"/><rect y="4" width="21" height="1" fill="#B22234"/><rect y="6" width="21" height="1" fill="#B22234"/><rect y="8" width="21" height="1" fill="#B22234"/><rect y="10" width="21" height="1" fill="#B22234"/><rect y="12" width="21" height="1" fill="#B22234"/><rect width="10" height="7" fill="#3C3B6E"/><circle cx="1.20" cy="1.00" r="0.35" fill="#9fa3c8"/><circle cx="2.80" cy="1.00" r="0.35" fill="#9fa3c8"/><circle cx="4.40" cy="1.00" r="0.35" fill="#9fa3c8"/><circle cx="6.00" cy="1.00" r="0.35" fill="#9fa3c8"/><circle cx="7.60" cy="1.00" r="0.35" fill="#9fa3c8"/><circle cx="2.00" cy="2.25" r="0.35" fill="#9fa3c8"/><circle cx="3.60" cy="2.25" r="0.35" fill="#9fa3c8"/><circle cx="5.20" cy="2.25" r="0.35" fill="#9fa3c8"/><circle cx="6.80" cy="2.25" r="0.35" fill="#9fa3c8"/><circle cx="8.40" cy="2.25" r="0.35" fill="#9fa3c8"/><circle cx="1.20" cy="3.50" r="0.35" fill="#9fa3c8"/><circle cx="2.80" cy="3.50" r="0.35" fill="#9fa3c8"/><circle cx="4.40" cy="3.50" r="0.35" fill="#9fa3c8"/><circle cx="6.00" cy="3.50" r="0.35" fill="#9fa3c8"/><circle cx="7.60" cy="3.50" r="0.35" fill="#9fa3c8"/><circle cx="2.00" cy="4.75" r="0.35" fill="#9fa3c8"/><circle cx="3.60" cy="4.75" r="0.35" fill="#9fa3c8"/><circle cx="5.20" cy="4.75" r="0.35" fill="#9fa3c8"/><circle cx="6.80" cy="4.75" r="0.35" fill="#9fa3c8"/><circle cx="8.40" cy="4.75" r="0.35" fill="#9fa3c8"/><circle cx="1.20" cy="6.00" r="0.35" fill="#9fa3c8"/><circle cx="2.80" cy="6.00" r="0.35" fill="#9fa3c8"/><circle cx="4.40" cy="6.00" r="0.35" fill="#9fa3c8"/><circle cx="6.00" cy="6.00" r="0.35" fill="#9fa3c8"/><circle cx="7.60" cy="6.00" r="0.35" fill="#9fa3c8"/></svg>
<svg style="left:1156px;top:542px" width="16" height="16" viewBox="0 0 16 16" overflow="visible"><defs></defs><path d="M1.07,4 A8,8 0 0 1 14.93,4 L8,4 A4,4 0 0 0 4.54,10 Z" fill="#DB4437"/><path d="M14.93,4 A8,8 0 0 1 8,16 L11.46,10 A4,4 0 0 0 8,4 Z" fill="#FFCD40"/><path d="M8,16 A8,8 0 0 1 1.07,4 L4.54,10 A4,4 0 0 0 11.46,10 Z" fill="#0F9D58"/><circle cx="8" cy="8" r="3.75" fill="#fff"/><circle cx="8" cy="8" r="3.05" fill="#4285F4"/></svg>
<svg style="left:1253px;top:542px" width="16" height="16" viewBox="0 0 16 16" overflow="visible"><path d="M6.5,4.8 C5.3,4.8 4.6,4 3.2,4 C1.4,4 0,5.8 0,8.6 C0,11.8 2.1,15.8 3.7,15.8 C4.8,15.8 5.2,15.2 6.5,15.2 C7.8,15.2 8.1,15.8 9.3,15.8 C10.8,15.8 12.2,13.4 13,11.5 C11.4,10.8 10.5,9.5 10.5,8 C10.5,6.6 11.4,5.5 12.5,4.8 C11.7,4.2 10.8,4 9.9,4 C8.4,4 7.7,4.8 6.5,4.8Z" fill="#B3B3B3"/><path d="M6.6,3.6 C6.6,1.8 8,0.3 9.8,0 C9.8,2 8.4,3.5 6.6,3.6Z" fill="#B3B3B3"/></svg>
<div class="t " style="top:9px;letter-spacing:-0.057px;font-size:11px;color:#111;left:34.80px;">Denise - my_account - LoggedIn -  Provide Support Live Chat Operator Console</div>
<div class="t " style="top:37px;letter-spacing:-0.182px;color:#555;left:76.20px;">General Info</div>
<div class="t " style="top:37px;letter-spacing:-0.060px;color:#555;left:186.80px;">Navigations</div>
<div class="t " style="top:37px;letter-spacing:-0.162px;color:#555;left:295.20px;">Proactive Chat</div>
<div class="t " style="top:37px;letter-spacing:-0.233px;color:#555;left:418.60px;">Find</div>
<div class="t " style="top:37px;letter-spacing:-0.171px;color:#555;left:487.30px;">Freeze the list</div>
<div class="t " style="top:37px;letter-spacing:0.083px;color:#555;left:608.00px;">Options</div>
<div class="t " style="top:66px;letter-spacing:-0.057px;left:103.70px;">Location</div>
<div class="t " style="top:66px;letter-spacing:-0.167px;left:212.65px;">Local Time</div>
<div class="t " style="top:66px;letter-spacing:-0.200px;left:289.10px;">IP Address</div>
<div class="t " style="top:66px;letter-spacing:-0.033px;left:392.55px;">Host</div>
<div class="t " style="top:66px;letter-spacing:-1.000px;left:490.10px;">ISP</div>
<div class="t " style="top:66px;letter-spacing:-0.567px;left:557.15px;">Chat</div>
<div class="t " style="top:66px;letter-spacing:-0.100px;left:592.35px;">Hits</div>
<div class="t " style="top:66px;letter-spacing:0.271px;left:621.35px;">Duration</div>
<div class="t " style="top:66px;letter-spacing:-0.273px;left:764.20px;">Current Page</div>
<div class="t " style="top:66px;letter-spacing:-0.257px;left:1078.60px;">Referrer</div>
<div class="t " style="top:66px;letter-spacing:-0.067px;left:1178.00px;">Browser</div>
<div class="t " style="top:68px;letter-spacing:-0.133px;left:970.20px;">Custom fileds</div>
<div class="t " style="top:66px;letter-spacing:-0.474px;left:1277.00px;">OS</div>
<div class="t " style="top:94px;letter-spacing:-0.200px;left:79.40px;">Australia, Victoria, Ge...</div>
<div class="t " style="top:94px;letter-spacing:-0.500px;left:227.00px;">18:53</div>
<div class="t " style="top:94px;letter-spacing:-0.308px;left:279.20px;">22.225.76.118</div>
<div class="t " style="top:94px;letter-spacing:-0.308px;left:366.10px;">22.225.76.118</div>
<div class="t lk" style="top:94px;letter-spacing:-0.483px;left:454.40px;">Telstra</div>
<div class="t " style="top:94px;letter-spacing:-0.322px;left:599.60px;">1</div>
<div class="t " style="top:94px;letter-spacing:-0.300px;left:622.75px;">00:11:58</div>
<div class="t lk" style="top:94px;letter-spacing:0.064px;left:676.00px;">yourwebsite.com/headphones/red-wired-headphon...</div>
<div class="t " style="top:94px;letter-spacing:-0.317px;left:1175.00px;">Edge (91.0...</div>
<div class="t " style="top:94px;letter-spacing:-0.274px;left:1273.30px;">Win</div>
<div class="t " style="top:124px;letter-spacing:-0.205px;left:79.40px;">China, Hubei, Huangg...</div>
<div class="t " style="top:124px;letter-spacing:-0.389px;left:226.78px;">17:53</div>
<div class="t " style="top:124px;letter-spacing:-0.275px;left:278.20px;">192.55.23.227</div>
<div class="t " style="top:124px;letter-spacing:-0.275px;left:365.10px;">192.55.23.227</div>
<div class="t lk" style="top:124px;letter-spacing:-0.180px;left:454.40px;">Chinanet Hube...</div>
<div class="t " style="top:124px;letter-spacing:-0.400px;left:597.30px;">20</div>
<div class="t " style="top:124px;letter-spacing:-0.352px;left:622.93px;">00:24:12</div>
<div class="t lk" style="top:124px;letter-spacing:0.097px;left:676.00px;">yourwebsite.com/profile/checkout</div>
<div class="t " style="top:124px;letter-spacing:-0.162px;left:967.40px;">ID: 11255</div>
<div class="t " style="top:124px;letter-spacing:-0.317px;left:1176.00px;">Chrome (91...</div>
<div class="t " style="top:124px;letter-spacing:-0.274px;left:1273.30px;">Win</div>
<div class="t " style="top:154px;letter-spacing:-0.130px;left:78.40px;">Hong Kong, Hong Ko...</div>
<div class="t " style="top:154px;letter-spacing:-0.389px;left:226.78px;">17:53</div>
<div class="t " style="top:154px;letter-spacing:-0.262px;left:278.20px;">145.255.125.55</div>
<div class="t " style="top:154px;letter-spacing:-0.262px;left:365.10px;">145.255.125.55</div>
<div class="t lk" style="top:154px;letter-spacing:-0.212px;left:453.40px;">Simcentric Solu...</div>
<div class="t " style="top:154px;letter-spacing:-0.375px;left:600.10px;">3</div>
<div class="t " style="top:154px;letter-spacing:-0.360px;left:622.46px;">00:40:44</div>
<div class="t lk" style="top:154px;letter-spacing:0.106px;left:676.00px;">yourwebsite.com/headphones/pro-gaming-wired-h...</div>
<div class="t " style="top:154px;letter-spacing:0.067px;left:1175.00px;">Mobile Chr...</div>
<div class="t " style="top:154px;letter-spacing:-0.288px;left:1273.30px;">And</div>
<div class="t " style="top:184px;letter-spacing:-0.064px;left:78.40px;">Hungary, Nograd, Kar...</div>
<div class="t " style="top:184px;letter-spacing:-0.375px;left:227.25px;">11:53</div>
<div class="t " style="top:184px;letter-spacing:-0.442px;left:279.20px;">24.255.156.65</div>
<div class="t " style="top:184px;letter-spacing:-0.442px;left:366.10px;">24.255.156.65</div>
<div class="t lk" style="top:184px;letter-spacing:-0.162px;left:454.40px;">Telenor Hungar...</div>
<div class="t " style="top:184px;letter-spacing:-0.322px;left:599.60px;">1</div>
<div class="t " style="top:184px;letter-spacing:-0.352px;left:622.93px;">00:07:26</div>
<div class="t lk" style="top:184px;letter-spacing:0.058px;left:676.00px;">yourwebsite.com/headphones/headphones-portable</div>
<div class="t lk" style="top:184px;letter-spacing:-0.083px;left:1073.30px;">www.youtub...</div>
<div class="t " style="top:184px;letter-spacing:-0.215px;left:1175.00px;">Firefox (89...</div>
<div class="t " style="top:184px;letter-spacing:-0.274px;left:1273.30px;">Win</div>
<div class="t " style="top:214px;letter-spacing:-0.154px;left:78.40px;">Italy, Friuli-Venezia Gi...</div>
<div class="t " style="top:214px;letter-spacing:-0.375px;left:227.25px;">11:53</div>
<div class="t " style="top:214px;letter-spacing:-0.442px;left:279.20px;">4.225.108.265</div>
<div class="t " style="top:214px;letter-spacing:-0.442px;left:366.10px;">4.225.108.265</div>
<div class="t lk" style="top:214px;letter-spacing:-0.111px;left:454.40px;">Vodafone Italia ...</div>
<div class="t " style="top:214px;letter-spacing:-0.375px;left:600.10px;">8</div>
<div class="t " style="top:214px;letter-spacing:-0.352px;left:622.93px;">01:02:57</div>
<div class="t lk" style="top:214px;letter-spacing:0.048px;left:676.00px;">yourwebsite.com/headphones/wired-headphones</div>
<div class="t " style="top:214px;letter-spacing:-0.317px;left:1176.00px;">Chrome (91...</div>
<div class="t " style="top:214px;letter-spacing:-0.288px;left:1272.30px;">Ubu</div>
<div class="t " style="top:244px;letter-spacing:-0.333px;left:79.40px;">Japan, Aichi, Nagoya, ...</div>
<div class="t " style="top:244px;letter-spacing:-0.500px;left:227.00px;">18:53</div>
<div class="t " style="top:244px;letter-spacing:-0.358px;left:278.20px;">165.150.38.24</div>
<div class="t " style="top:244px;letter-spacing:-0.358px;left:365.10px;">165.150.38.24</div>
<div class="t lk" style="top:244px;letter-spacing:-0.162px;left:454.40px;">Wire and Wirel...</div>
<div class="t " style="top:244px;letter-spacing:-0.322px;left:600.60px;">2</div>
<div class="t " style="top:244px;letter-spacing:-0.352px;left:622.93px;">00:08:11</div>
<div class="t lk" style="top:244px;letter-spacing:0.105px;left:676.00px;">yourwebsite.com/profile</div>
<div class="t " style="top:244px;letter-spacing:-0.166px;left:967.40px;">ID: 13958</div>
<div class="t " style="top:244px;letter-spacing:-0.317px;left:1176.00px;">Chrome (91...</div>
<div class="t " style="top:244px;letter-spacing:-0.274px;left:1273.30px;">Win</div>
<div class="t " style="top:274px;letter-spacing:-0.240px;left:78.40px;">Malaysia, Perak, Ipoh, ...</div>
<div class="t " style="top:274px;letter-spacing:-0.389px;left:226.78px;">17:53</div>
<div class="t " style="top:274px;letter-spacing:-0.358px;left:278.20px;">138.222.74.85</div>
<div class="t " style="top:274px;letter-spacing:-0.358px;left:365.10px;">138.222.74.85</div>
<div class="t lk" style="top:274px;letter-spacing:-0.133px;left:454.40px;">Telekom Malay...</div>
<div class="t " style="top:274px;letter-spacing:-0.322px;left:600.60px;">9</div>
<div class="t " style="top:274px;letter-spacing:-0.352px;left:622.93px;">00:48:09</div>
<div class="t lk" style="top:274px;letter-spacing:0.131px;left:676.00px;">yourwebsite.com/profile/orders</div>
<div class="t " style="top:274px;letter-spacing:-0.166px;left:967.40px;">ID: 89628</div>
<div class="t " style="top:274px;letter-spacing:-0.300px;left:1175.00px;">Safari (14.1)</div>
<div class="t " style="top:274px;letter-spacing:-0.302px;left:1272.30px;">Mac</div>
<div class="t " style="top:304px;letter-spacing:0.043px;left:78.40px;">Netherlands, Noord-...</div>
<div class="t " style="top:304px;letter-spacing:-0.375px;left:227.25px;">11:53</div>
<div class="t " style="top:304px;letter-spacing:-0.517px;left:279.20px;">55.165.245.21</div>
<div class="t " style="top:304px;letter-spacing:-0.517px;left:366.10px;">55.165.245.21</div>
<div class="t lk" style="top:304px;letter-spacing:-0.156px;left:454.40px;">Ziggo B.V.</div>
<div class="t " style="top:304px;letter-spacing:-0.697px;left:597.45px;">21</div>
<div class="t " style="top:304px;letter-spacing:-0.360px;left:622.46px;">02:01:35</div>
<div class="t lk" style="top:304px;letter-spacing:0.000px;left:676.00px;">yourwebsite.com/headphones/blue-wireless-headp...</div>
<div class="t lk" style="top:304px;letter-spacing:-0.185px;left:1073.30px;">www.bing.co...</div>
<div class="t " style="top:304px;letter-spacing:-0.317px;left:1175.00px;">Edge (91.0...</div>
<div class="t " style="top:304px;letter-spacing:-0.274px;left:1273.30px;">Win</div>
<div class="t " style="top:334px;letter-spacing:-0.091px;left:78.40px;">Portugal, Aveiro, Ave...</div>
<div class="t " style="top:334px;letter-spacing:-0.389px;left:226.78px;">10:53</div>
<div class="t " style="top:334px;letter-spacing:-0.275px;left:278.20px;">115.55.166.41</div>
<div class="t " style="top:334px;letter-spacing:-0.275px;left:365.10px;">115.55.166.41</div>
<div class="t lk" style="top:334px;letter-spacing:-0.194px;left:453.40px;">Pt Prime - Solu...</div>
<div class="t " style="top:334px;letter-spacing:-0.500px;left:573.50px;">...</div>
<div class="t " style="top:334px;letter-spacing:-0.375px;left:600.10px;">3</div>
<div class="t " style="top:334px;letter-spacing:-0.352px;left:622.93px;">00:13:02</div>
<div class="t lk" style="top:334px;letter-spacing:0.048px;left:676.00px;">yourwebsite.com/headphones/wired-headphones</div>
<div class="t " style="top:334px;letter-spacing:-0.317px;left:1176.00px;">Chrome (91...</div>
<div class="t " style="top:334px;letter-spacing:-0.274px;left:1273.30px;">Win</div>
<div class="t " style="top:364px;letter-spacing:-0.182px;left:78.40px;">Singapore, Singapore...</div>
<div class="t " style="top:364px;letter-spacing:-0.389px;left:226.78px;">17:53</div>
<div class="t " style="top:364px;letter-spacing:-0.358px;left:279.20px;">44.110.246.80</div>
<div class="t " style="top:364px;letter-spacing:-0.358px;left:366.10px;">44.110.246.80</div>
<div class="t lk" style="top:364px;letter-spacing:-0.107px;left:453.40px;">Digitalocean Llc</div>
<div class="t " style="top:364px;letter-spacing:-0.643px;left:596.92px;">13</div>
<div class="t " style="top:364px;letter-spacing:-0.360px;left:622.46px;">02:24:50</div>
<div class="t lk" style="top:364px;letter-spacing:-0.008px;left:676.00px;">yourwebsite.com/headphones/noise-cancelling-hea...</div>
<div class="t lk" style="top:364px;letter-spacing:-0.083px;left:1073.30px;">www.google...</div>
<div class="t " style="top:364px;letter-spacing:0.067px;left:1175.00px;">Mobile Chr...</div>
<div class="t " style="top:364px;letter-spacing:-0.288px;left:1273.30px;">And</div>
<div class="t " style="top:394px;letter-spacing:-0.118px;left:78.40px;">United Arab Emirates...</div>
<div class="t " style="top:394px;letter-spacing:-0.389px;left:226.78px;">13:53</div>
<div class="t " style="top:394px;letter-spacing:-0.358px;left:278.20px;">150.53.221.78</div>
<div class="t " style="top:394px;letter-spacing:-0.358px;left:365.10px;">150.53.221.78</div>
<div class="t lk" style="top:394px;letter-spacing:-0.271px;left:453.40px;">Emirates Teleco...</div>
<div class="t " style="top:394px;letter-spacing:-0.322px;left:599.60px;">1</div>
<div class="t " style="top:394px;letter-spacing:-0.352px;left:622.93px;">00:12:06</div>
<div class="t lk" style="top:394px;letter-spacing:0.000px;left:676.00px;">yourwebsite.com/headphones/professional-headph...</div>
<div class="t lk" style="top:394px;letter-spacing:-0.083px;left:1073.30px;">www.google...</div>
<div class="t " style="top:394px;letter-spacing:-0.317px;left:1176.00px;">Chrome (91...</div>
<div class="t " style="top:394px;letter-spacing:-0.302px;left:1272.30px;">Mac</div>
<div class="t " style="top:424px;letter-spacing:-0.068px;left:78.40px;">United Kingdom, Engl...</div>
<div class="t " style="top:424px;letter-spacing:-0.389px;left:226.78px;">10:53</div>
<div class="t " style="top:424px;letter-spacing:-0.275px;left:278.20px;">112.95.240.52</div>
<div class="t " style="top:424px;letter-spacing:-0.275px;left:365.10px;">112.95.240.52</div>
<div class="t lk" style="top:424px;letter-spacing:-0.082px;left:454.40px;">Virgin Media Li...</div>
<div class="t " style="top:424px;letter-spacing:-0.643px;left:596.92px;">10</div>
<div class="t " style="top:424px;letter-spacing:-0.352px;left:622.93px;">00:41:39</div>
<div class="t lk" style="top:424px;letter-spacing:0.131px;left:676.00px;">yourwebsite.com/profile/orders</div>
<div class="t " style="top:424px;letter-spacing:-0.166px;left:967.40px;">ID: 47289</div>
<div class="t " style="top:424px;letter-spacing:-0.300px;left:1175.00px;">Safari (14.1)</div>
<div class="t " style="top:424px;letter-spacing:-0.274px;left:1273.30px;">iOS</div>
<div class="t " style="top:454px;letter-spacing:-0.068px;left:78.40px;">United Kingdom, Engl...</div>
<div class="t " style="top:454px;letter-spacing:-0.389px;left:226.78px;">10:53</div>
<div class="t " style="top:454px;letter-spacing:-0.410px;left:279.20px;">95.45.81.62</div>
<div class="t " style="top:454px;letter-spacing:-0.410px;left:366.10px;">95.45.81.62</div>
<div class="t lk" style="top:454px;letter-spacing:-0.217px;left:454.40px;">The Smb Group</div>
<div class="t " style="top:454px;letter-spacing:-0.500px;left:573.50px;">...</div>
<div class="t " style="top:454px;letter-spacing:-0.697px;left:597.45px;">37</div>
<div class="t " style="top:454px;letter-spacing:-0.360px;left:622.46px;">01:27:01</div>
<div class="t lk" style="top:454px;letter-spacing:0.082px;left:676.00px;">yourwebsite.com/shopping-cart</div>
<div class="t " style="top:454px;letter-spacing:-0.166px;left:967.40px;">ID: 31576</div>
<div class="t " style="top:454px;letter-spacing:-0.317px;left:1176.00px;">Chrome (91...</div>
<div class="t " style="top:454px;letter-spacing:-0.274px;left:1273.30px;">Win</div>
<div class="t " style="top:484px;letter-spacing:-0.068px;left:78.40px;">United Kingdom, Engl...</div>
<div class="t " style="top:484px;letter-spacing:-0.389px;left:226.78px;">10:53</div>
<div class="t " style="top:484px;letter-spacing:-0.442px;left:279.20px;">78.24.222.145</div>
<div class="t " style="top:484px;letter-spacing:-0.442px;left:366.10px;">78.24.222.145</div>
<div class="t lk" style="top:484px;letter-spacing:-0.124px;left:453.40px;">British Telecom...</div>
<div class="t " style="top:484px;letter-spacing:-0.589px;left:597.39px;">11</div>
<div class="t " style="top:484px;letter-spacing:-0.352px;left:622.93px;">01:11:54</div>
<div class="t lk" style="top:484px;letter-spacing:0.052px;left:676.00px;">yourwebsite.com/discount</div>
<div class="t " style="top:484px;letter-spacing:-0.215px;left:1175.00px;">Firefox (89...</div>
<div class="t " style="top:484px;letter-spacing:-0.274px;left:1273.30px;">Win</div>
<div class="t " style="top:514px;letter-spacing:-0.239px;left:78.40px;">United States, New Yo...</div>
<div class="t " style="top:514px;letter-spacing:-0.402px;left:227.30px;">05:53</div>
<div class="t " style="top:514px;letter-spacing:-0.185px;left:278.20px;">140.115.206.50</div>
<div class="t " style="top:514px;letter-spacing:-0.185px;left:365.10px;">140.115.206.50</div>
<div class="t lk" style="top:514px;letter-spacing:-0.280px;left:454.40px;">Charter Commu...</div>
<div class="t " style="top:514px;letter-spacing:-0.375px;left:600.10px;">5</div>
<div class="t " style="top:514px;letter-spacing:-0.360px;left:622.46px;">00:58:05</div>
<div class="t lk" style="top:514px;letter-spacing:0.150px;left:676.00px;">yourwebsite.com/profile/shopping-cart</div>
<div class="t " style="top:514px;letter-spacing:-0.166px;left:967.40px;">ID: 23589</div>
<div class="t lk" style="top:514px;letter-spacing:-0.185px;left:1073.30px;">www.bing.co...</div>
<div class="t " style="top:514px;letter-spacing:-0.318px;left:1176.00px;">Opera (76.0)</div>
<div class="t " style="top:514px;letter-spacing:-0.274px;left:1273.30px;">Win</div>
<div class="t " style="top:544px;letter-spacing:-0.261px;left:78.40px;">United States, Pennsy...</div>
<div class="t " style="top:544px;letter-spacing:-0.402px;left:227.30px;">05:53</div>
<div class="t " style="top:544px;letter-spacing:-0.262px;left:279.20px;">88.202.215.115</div>
<div class="t " style="top:544px;letter-spacing:-0.262px;left:366.10px;">88.202.215.115</div>
<div class="t lk" style="top:544px;letter-spacing:0.062px;left:453.40px;">1&amp;1 Ionos Inc.</div>
<div class="t " style="top:544px;letter-spacing:-0.322px;left:599.60px;">1</div>
<div class="t " style="top:544px;letter-spacing:-0.352px;left:622.93px;">00:38:47</div>
<div class="t lk" style="top:544px;letter-spacing:0.053px;left:676.00px;">yourwebsite.com/headphones/pro-gaming-wireles...</div>
<div class="t " style="top:544px;letter-spacing:-0.317px;left:1176.00px;">Chrome (91...</div>
<div class="t " style="top:544px;letter-spacing:-0.302px;left:1272.30px;">Mac</div>
<div class="a" style="left:1295px;top:0;width:1px;height:798px;background:#BDBDBD"></div>
<div class="a" style="left:56px;top:788px;width:867px;height:4px;border-radius:2px;background:#C8C8C8"></div>
<div class="a" style="left:0;top:797px;width:1296px;height:1px;background:#BDBDBD"></div>
</body></html>
